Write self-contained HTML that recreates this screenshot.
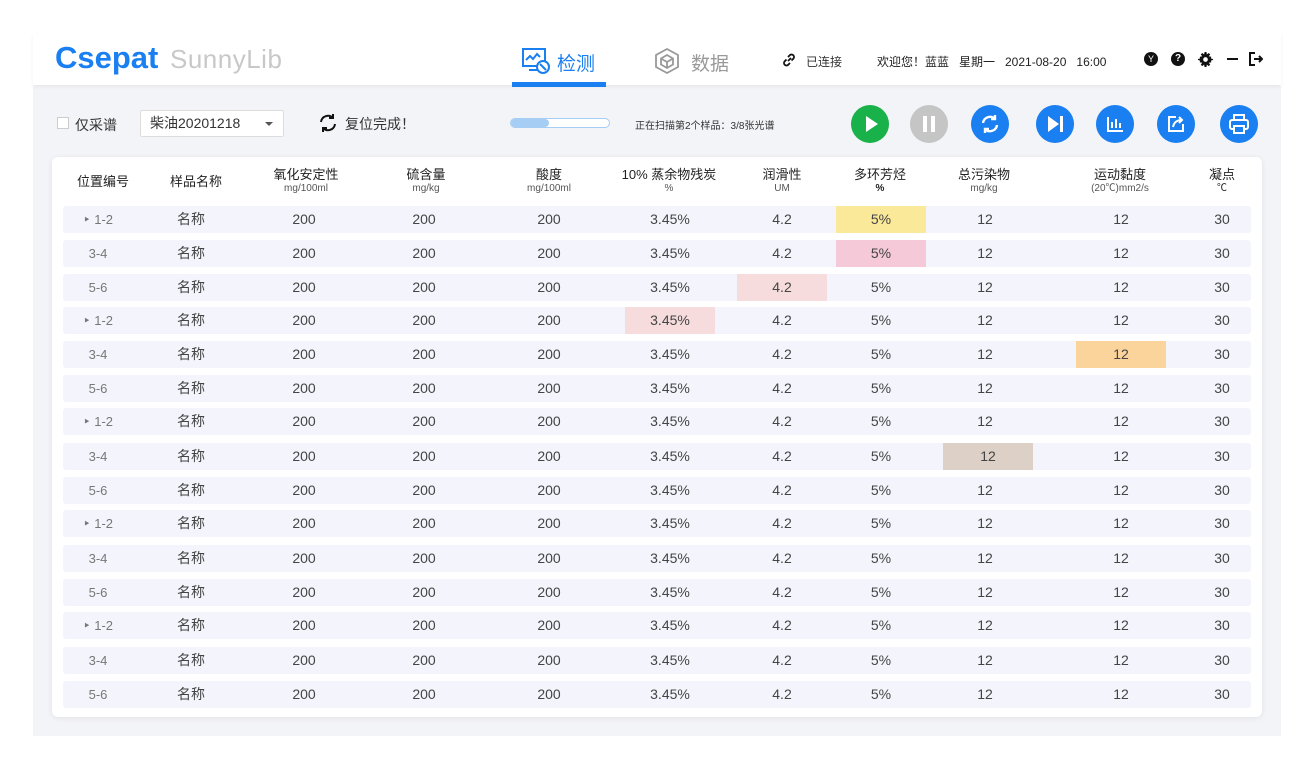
<!DOCTYPE html>
<html><head><meta charset="utf-8"><style>
*{margin:0;padding:0;box-sizing:border-box}
body{width:1315px;height:769px;background:#fff;font-family:"Liberation Sans","Noto Sans CJK SC",sans-serif;position:relative;overflow:hidden;color:#333}
.main{position:absolute;left:33px;top:33px;width:1248px;height:703px;background:#f3f4f8}
.hdr{position:absolute;left:33px;top:33px;width:1248px;height:52px;background:#fff;box-shadow:0 2px 4px rgba(0,0,0,.05)}
.a{position:absolute;white-space:nowrap}
.btn{position:absolute;top:105px;width:38px;height:38px;border-radius:50%;background:#1a7ff0}
.card{position:absolute;left:52px;top:157px;width:1210px;height:560px;background:#fff;border-radius:6px;box-shadow:0 1px 6px rgba(0,0,0,.08)}
.th{position:absolute;top:167px;width:120px;text-align:center;font-size:13px;color:#222;line-height:15px}
.th small{display:block;font-size:10px;color:#555;line-height:13px}
.r{position:absolute;left:63px;width:1188px;height:27px;background:#f4f5fc;border-radius:3px;font-size:14px;color:#444}
.r span{position:absolute;top:0;width:90px;height:27px;line-height:27px;text-align:center}
.r span:nth-child(1){left:-10px;color:#777;font-size:13px}
.r span:nth-child(2){left:83px}
.r span:nth-child(3){left:196px}
.r span:nth-child(4){left:316px}
.r span:nth-child(5){left:441px}
.r span:nth-child(6){left:562px}
.r span:nth-child(7){left:674px}
.r span:nth-child(8){left:773px}
.r span:nth-child(9){left:877px}
.r span:nth-child(10){left:1013px}
.r span:nth-child(11){left:1114px}
.y{background:#fbe99a}.p{background:#f5c9d7}.l{background:#f6dcdc}.o{background:#fad49b}.b{background:#ddd0c7}
</style></head><body>
<div class="main"></div>
<div class="hdr"></div>
<div class="a" style="left:55px;top:40px;font-size:31px;font-weight:bold;color:#1a7ff0;letter-spacing:0px">Csepat</div>
<div class="a" style="left:170px;top:44px;font-size:26px;color:#c8c8c8;letter-spacing:0.5px">SunnyLib</div>
<svg class="a" style="left:521px;top:47px" width="30" height="28" viewBox="0 0 30 28" fill="none" stroke="#1a7ff0" stroke-width="2"><rect x="2" y="2" width="22" height="17"/><path d="M5 13l4-4 3 3 4-5 3 3"/><path d="M8 23h10"/><circle cx="22" cy="20" r="6" fill="#fff"/><path d="M19 17l6 6" /></svg>
<div class="a" style="left:557px;top:49px;font-size:19px;color:#1a7ff0">检测</div>
<div class="a" style="left:512px;top:82px;width:94px;height:5px;background:#1a7ff0"></div>
<svg class="a" style="left:653px;top:47px" width="28" height="28" viewBox="0 0 28 28" fill="none" stroke="#999" stroke-width="1.8"><path d="M14 2l11 6v12l-11 6-11-6V8z"/><path d="M14 8l6 3.5v6L14 21l-6-3.5v-6z M8 11.5l6 3.5 6-3.5 M14 15v6"/></svg>
<div class="a" style="left:691px;top:49px;font-size:19px;color:#999">数据</div>
<svg class="a" style="left:781px;top:52px" width="16" height="16" fill="none" stroke="#111" stroke-width="1.8"><path d="M7 9l3-3M5.5 7.5L3.5 9.5a2.5 2.5 0 003.5 3.5l2-2M10.5 8.5l2-2A2.5 2.5 0 009 3L7 5"/></svg>
<div class="a" style="left:806px;top:53px;font-size:12px">已连接</div>
<div class="a" style="left:877px;top:53px;font-size:12px;color:#222">欢迎您！蓝蓝&nbsp;&nbsp;&nbsp;星期一&nbsp;&nbsp;&nbsp;2021-08-20&nbsp;&nbsp;&nbsp;16:00</div>
<div class="a" style="left:1144px;top:52px;width:14px;height:14px;border-radius:50%;background:#111;color:#fff;font-size:9px;text-align:center;line-height:14px">Y</div>
<div class="a" style="left:1171px;top:52px;width:14px;height:14px;border-radius:50%;background:#111;color:#fff;font-size:10px;font-weight:bold;text-align:center;line-height:14px">?</div>
<svg class="a" style="left:1198px;top:52px" width="15" height="15" viewBox="0 0 16 16"><path fill="#111" d="M7 0h2l.5 2.5 2-1.5 1.5 1.5-1.5 2L14 5v2h0l2 .5v1l-2 .5v2l-2.5.5 1.5 2-1.5 1.5-2-1.5L9 16H7l-.5-2.5-2 1.5L3 13.5l1.5-2L2 11V9L0 8.5v-1L2 7V5l2.5-.5L3 2.5 4.5 1l2 1.5z"/><circle cx="8" cy="8" r="2.5" fill="#fff"/></svg>
<div class="a" style="left:1227px;top:58px;width:11px;height:2px;background:#111"></div>
<svg class="a" style="left:1249px;top:52px" width="14" height="14" fill="none" stroke="#111" stroke-width="2"><path d="M6 1H1v12h5M5 7h8M10 4l3 3-3 3"/></svg>

<div class="a" style="left:57px;top:117px;width:12px;height:12px;border:1px solid #ccc;background:#fff"></div>
<div class="a" style="left:75px;top:115px;font-size:14px">仅采谱</div>
<div class="a" style="left:140px;top:110px;width:144px;height:27px;border:1px solid #ddd;background:#fff;border-radius:2px;font-size:14px;line-height:25px;padding-left:9px">柴油20201218<span style="position:absolute;right:10px;top:11px;border:4px solid transparent;border-top:4px solid #555"></span></div>
<svg class="a" style="left:318px;top:113px" width="20" height="20" fill="none" stroke="#111" stroke-width="2"><path d="M3 9a7 7 0 0112-4M17 11a7 7 0 01-12 4"/><path d="M15 1v4h-4M5 19v-4h4"/></svg>
<div class="a" style="left:345px;top:114px;font-size:14px">复位完成！</div>
<div class="a" style="left:510px;top:118px;width:100px;height:10px;border:1px solid #a6cdf3;border-radius:5px;background:#fff"><div style="width:38px;height:8px;background:#a6cdf3;border-radius:4px"></div></div>
<div class="a" style="left:635px;top:117px;font-size:10px">正在扫描第2个样品：3/8张光谱</div>

<div class="btn" style="left:851px;background:#19b24a"><div class="a" style="left:15px;top:11px;border-left:12px solid #fff;border-top:8px solid transparent;border-bottom:8px solid transparent"></div></div>
<div class="btn" style="left:910px;background:#c5c5c5"><div class="a" style="left:13px;top:11px;width:4px;height:16px;background:#fff"></div><div class="a" style="left:21px;top:11px;width:4px;height:16px;background:#fff"></div></div>
<div class="btn" style="left:971px"><svg class="a" style="left:8px;top:8px" width="22" height="22" fill="none" stroke="#fff" stroke-width="2.4"><path d="M4 10a7 7 0 0112-4M18 12a7 7 0 01-12 4"/><path d="M16 2v4h-4M6 20v-4h4"/></svg></div>
<div class="btn" style="left:1036px"><div class="a" style="left:12px;top:11px;border-left:11px solid #fff;border-top:8px solid transparent;border-bottom:8px solid transparent"></div><div class="a" style="left:24px;top:11px;width:3px;height:16px;background:#fff"></div></div>
<div class="btn" style="left:1096px"><svg class="a" style="left:9px;top:9px" width="20" height="20" fill="none" stroke="#fff" stroke-width="2"><path d="M3 3v14h15M7 14V8M11 14V5M15 14V9"/></svg></div>
<div class="btn" style="left:1157px"><svg class="a" style="left:9px;top:9px" width="20" height="20" fill="none" stroke="#fff" stroke-width="2"><path d="M10 3H3v14h14v-7"/><path d="M7 13c1-5 4-7 9-7M13 3l3 3-3 3"/></svg></div>
<div class="btn" style="left:1220px"><svg class="a" style="left:8px;top:8px" width="22" height="22" fill="none" stroke="#fff" stroke-width="2"><rect x="6" y="2" width="10" height="5"/><rect x="2" y="7" width="18" height="9" rx="2"/><rect x="6" y="13" width="10" height="7" fill="#1a7ff0"/></svg></div>

<div class="card"></div>
<div class="th" style="left:43px;top:174px">位置编号</div>
<div class="th" style="left:136px;top:174px">样品名称</div>
<div class="th" style="left:246px">氧化安定性<small>mg/100ml</small></div>
<div class="th" style="left:366px">硫含量<small>mg/kg</small></div>
<div class="th" style="left:489px">酸度<small>mg/100ml</small></div>
<div class="th" style="left:609px">10% 蒸余物残炭<small>%</small></div>
<div class="th" style="left:722px">润滑性<small>UM</small></div>
<div class="th" style="left:820px">多环芳烃<small style="color:#222;font-weight:bold">%</small></div>
<div class="th" style="left:924px">总污染物<small>mg/kg</small></div>
<div class="th" style="left:1060px">运动黏度<small>(20℃)mm2/s</small></div>
<div class="th" style="left:1162px">凝点<small style="color:#222">℃</small></div>

<div class="r" style="top:206px"><span>‣ 1-2</span><span>名称</span><span>200</span><span>200</span><span>200</span><span>3.45%</span><span>4.2</span><span class="y">5%</span><span>12</span><span>12</span><span>30</span></div>
<div class="r" style="top:240px"><span>3-4</span><span>名称</span><span>200</span><span>200</span><span>200</span><span>3.45%</span><span>4.2</span><span class="p">5%</span><span>12</span><span>12</span><span>30</span></div>
<div class="r" style="top:274px"><span>5-6</span><span>名称</span><span>200</span><span>200</span><span>200</span><span>3.45%</span><span class="l">4.2</span><span>5%</span><span>12</span><span>12</span><span>30</span></div>
<div class="r" style="top:307px"><span>‣ 1-2</span><span>名称</span><span>200</span><span>200</span><span>200</span><span class="l">3.45%</span><span>4.2</span><span>5%</span><span>12</span><span>12</span><span>30</span></div>
<div class="r" style="top:341px"><span>3-4</span><span>名称</span><span>200</span><span>200</span><span>200</span><span>3.45%</span><span>4.2</span><span>5%</span><span>12</span><span class="o">12</span><span>30</span></div>
<div class="r" style="top:375px"><span>5-6</span><span>名称</span><span>200</span><span>200</span><span>200</span><span>3.45%</span><span>4.2</span><span>5%</span><span>12</span><span>12</span><span>30</span></div>
<div class="r" style="top:408px"><span>‣ 1-2</span><span>名称</span><span>200</span><span>200</span><span>200</span><span>3.45%</span><span>4.2</span><span>5%</span><span>12</span><span>12</span><span>30</span></div>
<div class="r" style="top:443px"><span>3-4</span><span>名称</span><span>200</span><span>200</span><span>200</span><span>3.45%</span><span>4.2</span><span>5%</span><span class="b" style="left:880px">12</span><span>12</span><span>30</span></div>
<div class="r" style="top:477px"><span>5-6</span><span>名称</span><span>200</span><span>200</span><span>200</span><span>3.45%</span><span>4.2</span><span>5%</span><span>12</span><span>12</span><span>30</span></div>
<div class="r" style="top:510px"><span>‣ 1-2</span><span>名称</span><span>200</span><span>200</span><span>200</span><span>3.45%</span><span>4.2</span><span>5%</span><span>12</span><span>12</span><span>30</span></div>
<div class="r" style="top:545px"><span>3-4</span><span>名称</span><span>200</span><span>200</span><span>200</span><span>3.45%</span><span>4.2</span><span>5%</span><span>12</span><span>12</span><span>30</span></div>
<div class="r" style="top:579px"><span>5-6</span><span>名称</span><span>200</span><span>200</span><span>200</span><span>3.45%</span><span>4.2</span><span>5%</span><span>12</span><span>12</span><span>30</span></div>
<div class="r" style="top:612px"><span>‣ 1-2</span><span>名称</span><span>200</span><span>200</span><span>200</span><span>3.45%</span><span>4.2</span><span>5%</span><span>12</span><span>12</span><span>30</span></div>
<div class="r" style="top:647px"><span>3-4</span><span>名称</span><span>200</span><span>200</span><span>200</span><span>3.45%</span><span>4.2</span><span>5%</span><span>12</span><span>12</span><span>30</span></div>
<div class="r" style="top:681px"><span>5-6</span><span>名称</span><span>200</span><span>200</span><span>200</span><span>3.45%</span><span>4.2</span><span>5%</span><span>12</span><span>12</span><span>30</span></div>
</body></html>
